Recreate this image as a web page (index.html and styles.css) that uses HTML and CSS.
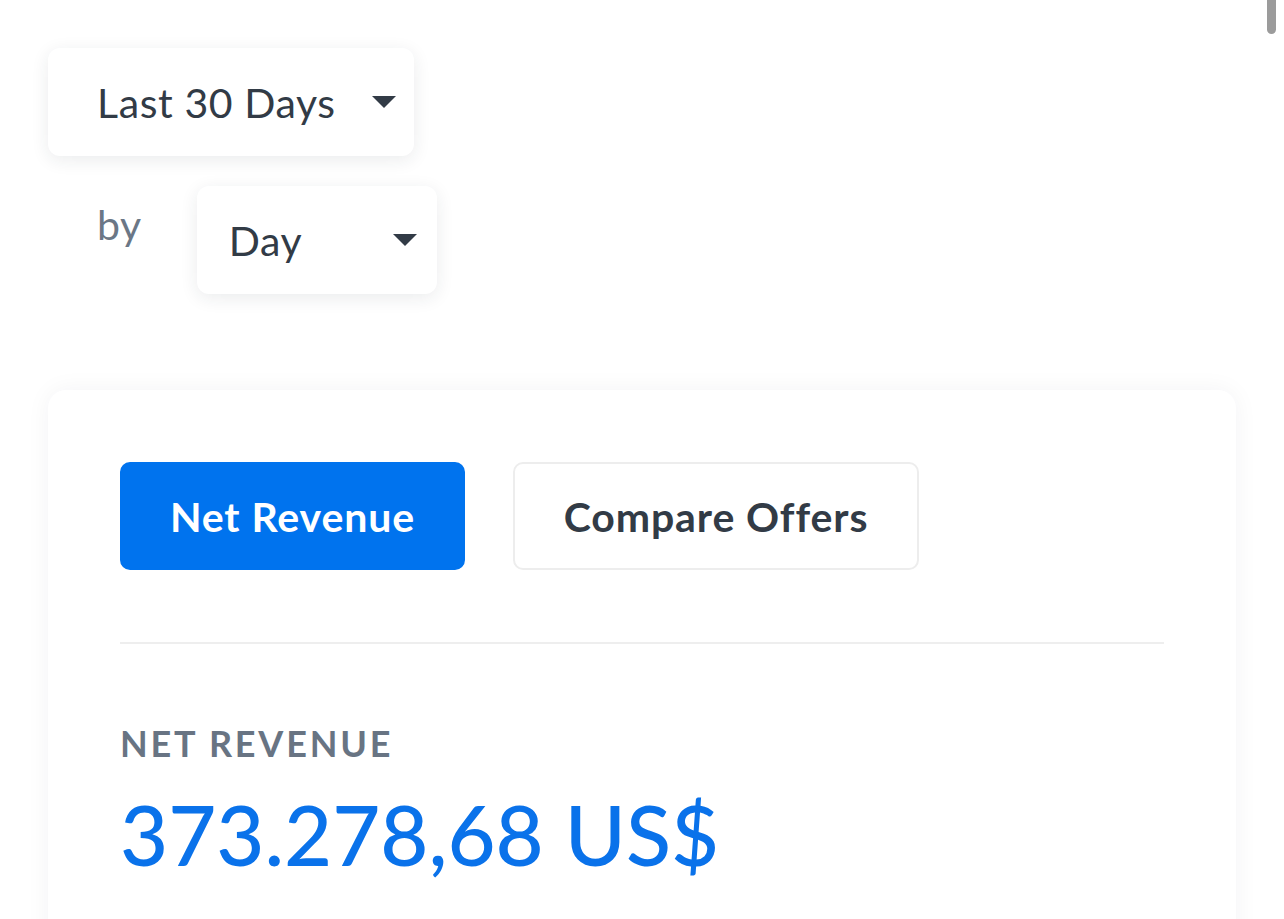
FILE: index.html
```html
<!DOCTYPE html>
<html lang="en">
<head>
<meta charset="utf-8">
<title>Net Revenue</title>
<link rel="stylesheet" href="styles.css">
</head>
<body>
<div class="page">
  <div class="filters">
    <div class="select select-range">
      <span class="select-text">Last 30 Days</span>
      <span class="caret"></span>
    </div>
    <div class="by-row">
      <span class="by">by</span>
      <div class="select select-period">
        <span class="select-text">Day</span>
        <span class="caret"></span>
      </div>
    </div>
  </div>
  <div class="card">
    <div class="tabs">
      <button class="tab tab-active">Net Revenue</button>
      <button class="tab">Compare Offers</button>
    </div>
    <div class="divider"></div>
    <div class="metric-label">NET REVENUE</div>
    <div class="metric-value">373.278,68 US$</div>
  </div>
</div>
<div class="scroll-thumb"></div>
</body>
</html>
```
FILE: styles.css
```css
html, body {
  margin: 0;
  padding: 0;
  background: #ffffff;
}
body {
  font-family: "Lato", "Noto Sans", "Liberation Sans", sans-serif;
  color: #323b46;
}
.page {
  padding: 48px 48px 0 48px;
}
.filters {
  display: flex;
  flex-direction: column;
  gap: 30px;
}
.select {
  box-sizing: border-box;
  height: 108px;
  background: #fff;
  border-radius: 12px;
  box-shadow: 0 4px 18px rgba(30, 40, 60, 0.09);
  display: flex;
  align-items: center;
  justify-content: space-between;
  font-size: 41px;
  letter-spacing: 0.6px;
  color: #323b46;
}
.select-range {
  width: 366px;
  padding: 0 18px 0 49px;
}
.select-period {
  width: 240px;
  padding: 0 20px 0 32px;
}
.select-text {
  line-height: 1;
}
.caret {
  width: 0;
  height: 0;
  border-left: 12px solid transparent;
  border-right: 12px solid transparent;
  border-top: 12px solid #323b46;
}
.by-row {
  display: flex;
  align-items: flex-start;
  gap: 55px;
  padding-left: 49px;
}
.by {
  font-size: 41px;
  color: #6b7786;
  margin-top: 14px;
  letter-spacing: 0.6px;
}
.card {
  margin-top: 96px;
  background: #fff;
  border-radius: 18px;
  box-shadow: 0 0 24px rgba(30, 40, 60, 0.05);
  padding: 72px 72px 80px 72px;
  min-height: 700px;
}
.tabs {
  display: flex;
  gap: 48px;
}
.tab {
  box-sizing: border-box;
  height: 108px;
  border-radius: 10px;
  font-family: inherit;
  font-size: 41px;
  font-weight: 700;
  letter-spacing: 0.9px;
  padding: 0;
  background: #fff;
  color: #323b46;
  border: 2px solid #ededed;
}
.tab-active {
  background: #0073ee;
  border-color: #0073ee;
  color: #fff;
  width: 345px;
}
.tab:not(.tab-active) {
  width: 406px;
}
.divider {
  margin-top: 72px;
  height: 2px;
  background: #eeeeee;
}
.metric-label {
  margin-top: 81px;
  font-size: 36px;
  font-weight: 700;
  letter-spacing: 2.8px;
  color: #687483;
  line-height: 1;
}
.metric-value {
  margin-top: 28px;
  font-size: 83px;
  font-weight: 500;
  color: #0a72ea;
  line-height: 1.1;
}
.scroll-thumb {
  position: fixed;
  top: 0;
  right: 8px;
  width: 9px;
  height: 34px;
  border-radius: 0 0 5px 5px;
  background: #9b9b9b;
}
```
